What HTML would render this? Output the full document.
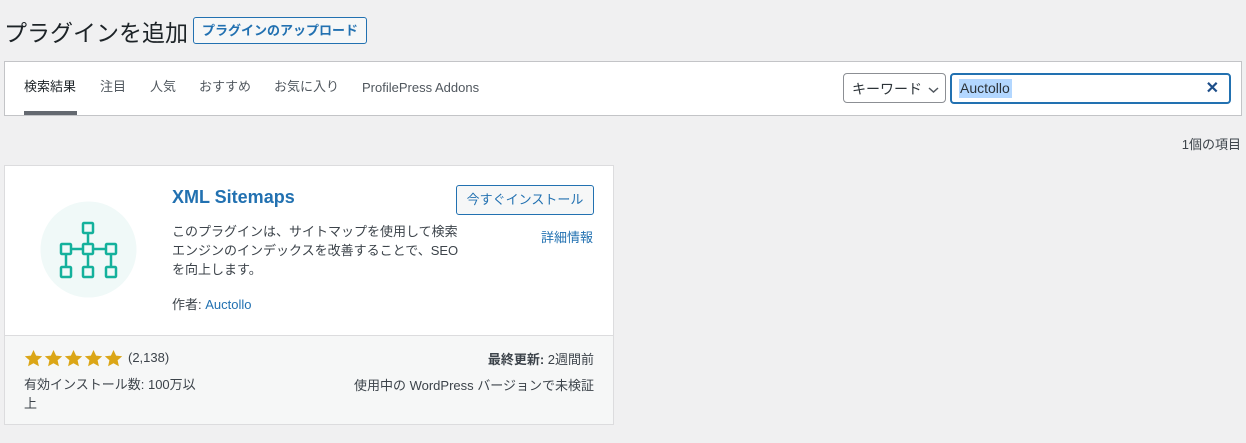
<!DOCTYPE html>
<html><head><meta charset="utf-8"><style>
*{box-sizing:border-box;margin:0;padding:0}
body{width:1246px;height:443px;background:#f0f0f1;font-family:"Liberation Sans","Noto Sans CJK JP",sans-serif;color:#3c434a;font-size:13px;position:relative;overflow:hidden}
.a{position:absolute;white-space:nowrap}
h1{position:absolute;left:4px;top:14px;font-size:23px;font-weight:400;color:#1d2327}
.up{position:absolute;left:193px;top:17px;width:174px;height:27px;border:1px solid #2271b1;border-radius:3px;background:#f6f7f7;color:#2271b1;font-size:13px;font-weight:700;text-align:center;line-height:25px}
.bar{position:absolute;left:4px;top:61px;width:1238px;height:55px;background:#fff;border:1px solid #c3c4c7}
.tab{position:absolute;top:16px;height:18px;line-height:18px;font-size:13px;color:#50575e}
.ul{position:absolute;left:19px;top:49px;width:53px;height:4px;background:#646970}
.sel{position:absolute;left:838px;top:11px;width:103px;height:30px;border:1px solid #8c8f94;border-radius:4px;font-size:14px;color:#2c3338;padding:5px 0 0 8px}
.inp{position:absolute;left:945px;top:11px;width:281px;height:31px;border:2px solid #2271b1;border-radius:4px;font-size:14px;color:#2c3338}
.card{position:absolute;left:4px;top:165px;width:610px;height:260px;background:#fff;border:1px solid #dcdcde}
.bot{position:absolute;left:0;top:169px;width:608px;height:89px;background:#f6f7f7;border-top:1px solid #dcdcde}
.btn{position:absolute;left:451px;top:19px;width:138px;height:30px;border:1px solid #2271b1;border-radius:3px;color:#2271b1;font-size:13px;text-align:center;line-height:28px;background:#f6f7f7}
a{color:#2271b1;text-decoration:none}
</style></head><body>
<h1>プラグインを追加</h1>
<div class="up">プラグインのアップロード</div>
<div class="bar">
<span class="tab" style="left:19px;color:#1d2327">検索結果</span>
<span class="tab" style="left:95px">注目</span>
<span class="tab" style="left:145px">人気</span>
<span class="tab" style="left:194px">おすすめ</span>
<span class="tab" style="left:269px">お気に入り</span>
<span class="tab" style="left:357px;top:17px">ProfilePress Addons</span>
<div class="ul"></div>
<div class="sel">キーワード <svg width="11" height="8" viewBox="0 0 11 8" style="margin-left:2px"><path d="M1 2l4.5 4 4.5-4" fill="none" stroke="#50575e" stroke-width="1.5"/></svg></div>
<div class="inp"><span style="position:absolute;left:7px;top:4px;background:#b3d7ff;padding:1px 2px 2px 1px">Auctollo</span><span style="position:absolute;right:10px;top:3px;color:#1d4e89;font-weight:700;font-size:16px">✕</span></div>
</div>
<div class="a" style="right:5px;top:134px;font-size:13px">1個の項目</div>
<div class="card">
<svg class="a" style="left:35px;top:35px" width="97" height="97" viewBox="0 0 97 97">
<circle cx="48.5" cy="48.5" r="48" fill="#f0f9f8"/>
<g fill="none" stroke="#14b19c" stroke-width="2.5">
<rect x="43" y="22" width="10" height="10" rx="1"/>
<rect x="21" y="43" width="10" height="10" rx="1"/><rect x="43" y="43" width="10" height="10" rx="1"/><rect x="66" y="43" width="10" height="10" rx="1"/>
<rect x="21" y="66" width="10" height="10" rx="1"/><rect x="43" y="66" width="10" height="10" rx="1"/><rect x="66" y="66" width="10" height="10" rx="1"/>
<path d="M48 32v11M31 48h12M53 48h13M26 53v13M48 53v13M71 53v13"/>
</g></svg>
<div class="a" style="left:167px;top:21px;font-size:18px;font-weight:700;color:#2271b1">XML Sitemaps</div>
<div class="btn">今すぐインストール</div>
<div class="a" style="left:536px;top:61px"><a>詳細情報</a></div>
<div class="a" style="left:167px;top:56px;line-height:19px;white-space:normal;width:290px">このプラグインは、サイトマップを使用して検索エンジンのインデックスを改善することで、SEOを向上します。</div>
<div class="a" style="left:167px;top:128px">作者: <a>Auctollo</a></div>
<div class="bot">
<svg class="a" style="left:19px;top:13px" width="100" height="20" viewBox="0 0 100 20">
<g fill="#dba617">
<path id="s" d="M9.5 1l2.6 5.6 6.1.6-4.6 4.1 1.3 6-5.4-3.1-5.4 3.1 1.3-6L.8 7.2l6.1-.6z"/>
<use href="#s" x="20"/><use href="#s" x="40"/><use href="#s" x="60"/><use href="#s" x="80"/>
</g></svg>
<div class="a" style="left:123px;top:14px">(2,138)</div>
<div class="a" style="left:19px;top:39px;line-height:19px;white-space:normal;width:180px">有効インストール数: 100万以上</div>
<div class="a" style="right:19px;top:13px"><b>最終更新:</b> 2週間前</div>
<div class="a" style="right:19px;top:39px">使用中の WordPress バージョンで未検証</div>
</div>
</div>
</body></html>
